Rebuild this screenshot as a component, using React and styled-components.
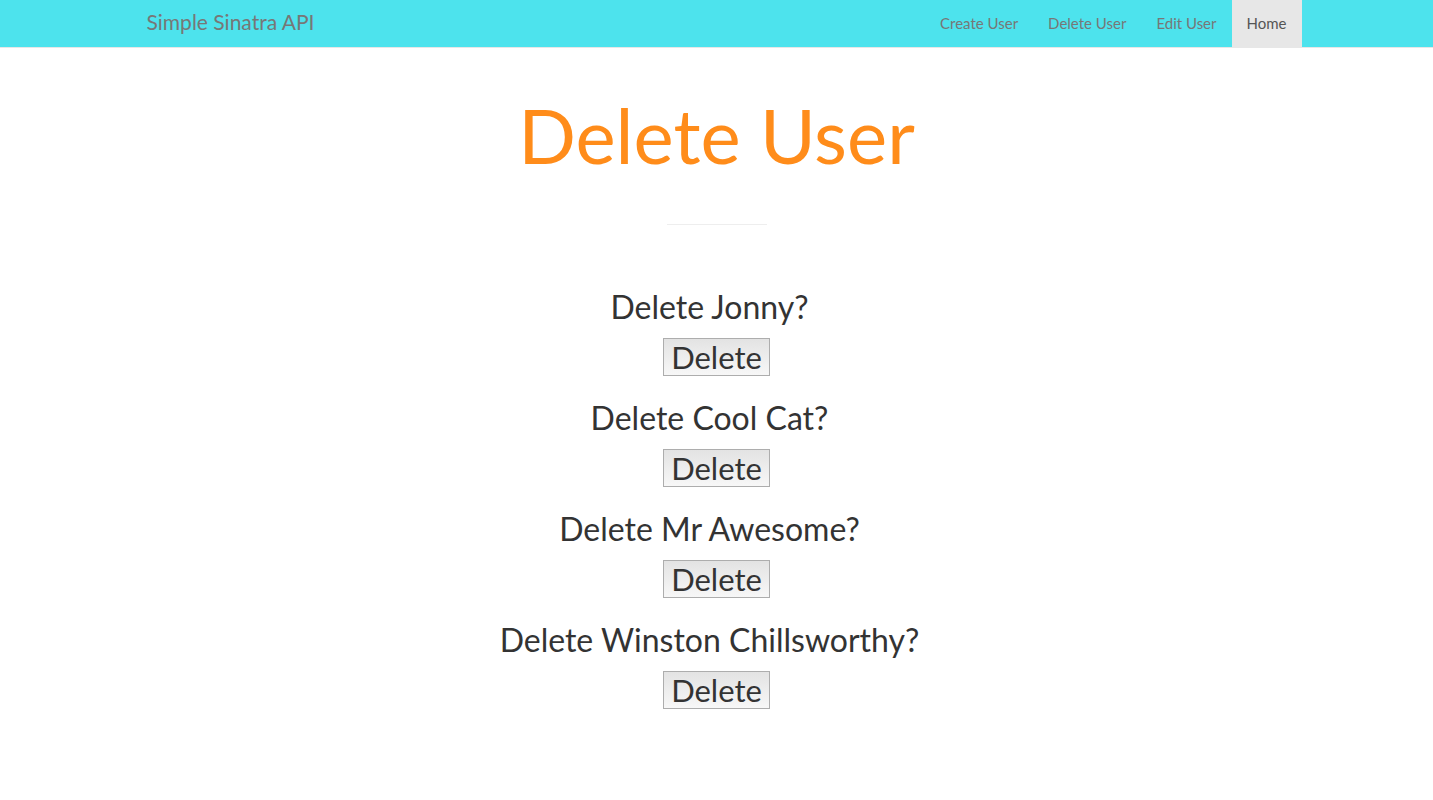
import React from "react";
import styled, { createGlobalStyle } from "styled-components";

const GlobalStyle = createGlobalStyle`
  *, *::before, *::after { box-sizing: border-box; }
  body {
    margin: 0;
    background: #fff;
    color: #333;
    font-family: Lato, "Liberation Sans", sans-serif;
    font-size: 15px;
    line-height: 20px;
  }
`;

const Navbar = styled.nav`
  background: #4de3ed;
  border-bottom: 1px solid #e7e7e7;
`;

const Container = styled.div`
  display: flex;
  justify-content: space-between;
  max-width: 1170px;
  margin: 0 auto;
`;

const Brand = styled.a`
  padding: 12px 15px 15px;
  color: #777;
  font-size: 21px;
  text-decoration: none;
`;

const NavList = styled.ul`
  display: flex;
  margin: 0 0 -1px;
  padding: 0;
  list-style: none;
`;

const NavLink = styled.a`
  display: block;
  padding: 13px 15px 15px;
  color: ${(p) => (p.$active ? "#555" : "#777")};
  background: ${(p) => (p.$active ? "#e7e7e7" : "transparent")};
  text-decoration: none;
`;

const Main = styled.main`
  padding: 48px 15px 90px;
  text-align: center;
`;

const Title = styled.h1`
  margin: 0;
  color: #ff8c1a;
  font-size: 76px;
  font-weight: 400;
  line-height: 78px;
`;

const Divider = styled.hr`
  width: 100px;
  margin: 50px auto 62px;
  border: 0;
  border-top: 1px solid #eee;
`;

const UserList = styled.div`
  display: grid;
  gap: 22px;
`;

const UserForm = styled.form`
  display: flex;
  flex-direction: column;
  align-items: center;
  gap: 11px;
`;

const Question = styled.label`
  padding-right: 14px;
  font-size: 32px;
  line-height: 40px;
`;

const DeleteButton = styled.button`
  padding: 0 7px;
  min-width: 106px;
  border: 1px solid #adadad;
  border-radius: 0;
  background: linear-gradient(#e3e3e3, #f7f7f7);
  color: #333;
  font: inherit;
  font-size: 31px;
  line-height: 36px;
`;

const links = ["Create User", "Delete User", "Edit User", "Home"];
const users = ["Jonny", "Cool Cat", "Mr Awesome", "Winston Chillsworthy"];

export default function App() {
  return (
    <>
      <GlobalStyle />
      <Navbar>
        <Container>
          <Brand href="#">Simple Sinatra API</Brand>
          <NavList>
            {links.map((label) => (
              <li key={label}>
                <NavLink href="#" $active={label === "Home"}>{label}</NavLink>
              </li>
            ))}
          </NavList>
        </Container>
      </Navbar>
      <Main>
        <Title>Delete User</Title>
        <Divider />
        <UserList>
          {users.map((name, i) => (
            <UserForm key={name} onSubmit={(e) => e.preventDefault()}>
              <Question htmlFor={`delete-${i}`}>Delete {name}?</Question>
              <DeleteButton id={`delete-${i}`} type="submit">Delete</DeleteButton>
            </UserForm>
          ))}
        </UserList>
      </Main>
    </>
  );
}
